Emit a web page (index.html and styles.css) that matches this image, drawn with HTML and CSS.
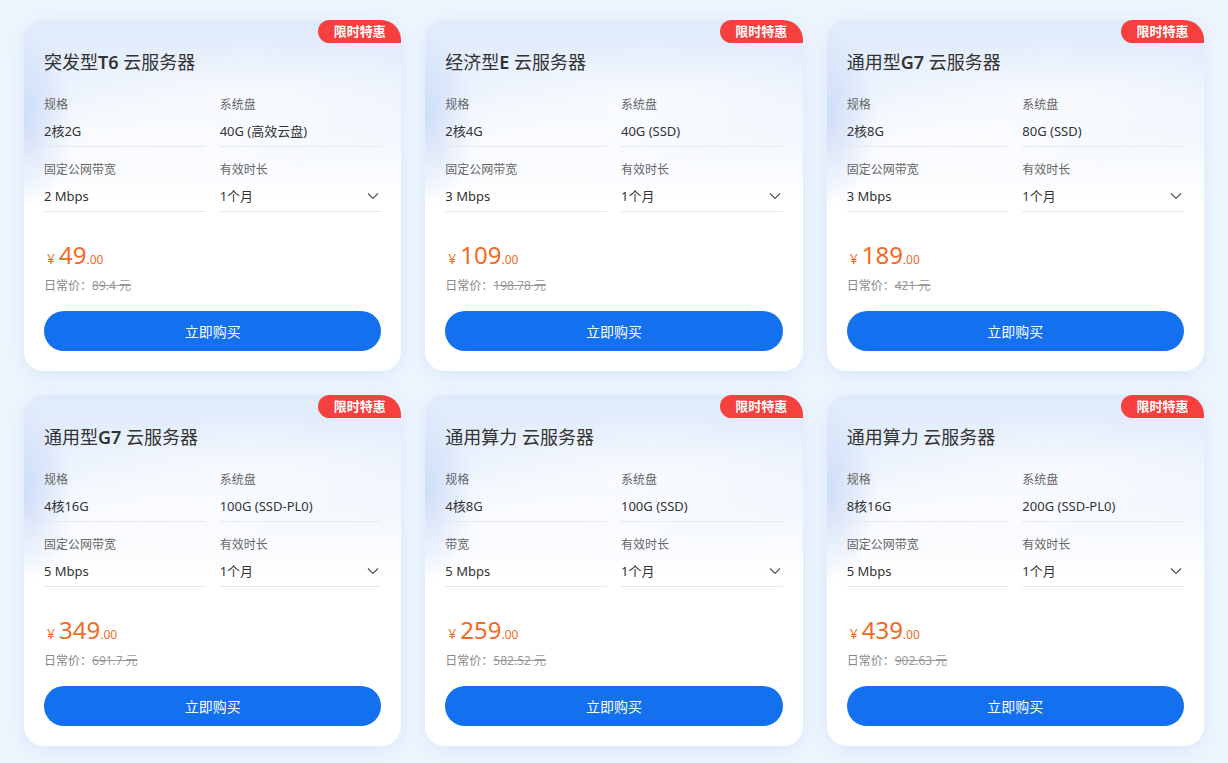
FILE: index.html
```html
<!DOCTYPE html>
<html>
  <head>
    <meta charset="UTF-8">
    <title>云服务器 限时特惠</title>
    <link rel="stylesheet" href="styles.css">
  </head>
  <body>
    <div class="grid">
      <div class="card">
        <span class="badge">限时特惠</span>
        <h2 class="title">突发型<b>T6</b> 云服务器</h2>
        <div class="fields">
          <div class="field"><div class="label">规格</div><div class="value">2核2G</div></div>
          <div class="field"><div class="label">系统盘</div><div class="value">40G (高效云盘)</div></div>
          <div class="field"><div class="label">固定公网带宽</div><div class="value">2 Mbps</div></div>
          <div class="field"><div class="label">有效时长</div><div class="value select">1个月<svg class="chev" viewBox="0 0 12 8"><path d="M1 1.5l5 5 5-5"/></svg></div></div>
        </div>
        <div class="price"><span class="yen">¥</span><span class="num">49</span><span class="dec">.00</span></div>
        <div class="orig">日常价：<s>89.4 元</s></div>
        <button class="buy">立即购买</button>
      </div>
      <div class="card">
        <span class="badge">限时特惠</span>
        <h2 class="title">经济型<b>E</b> 云服务器</h2>
        <div class="fields">
          <div class="field"><div class="label">规格</div><div class="value">2核4G</div></div>
          <div class="field"><div class="label">系统盘</div><div class="value">40G (SSD)</div></div>
          <div class="field"><div class="label">固定公网带宽</div><div class="value">3 Mbps</div></div>
          <div class="field"><div class="label">有效时长</div><div class="value select">1个月<svg class="chev" viewBox="0 0 12 8"><path d="M1 1.5l5 5 5-5"/></svg></div></div>
        </div>
        <div class="price"><span class="yen">¥</span><span class="num">109</span><span class="dec">.00</span></div>
        <div class="orig">日常价：<s>198.78 元</s></div>
        <button class="buy">立即购买</button>
      </div>
      <div class="card">
        <span class="badge">限时特惠</span>
        <h2 class="title">通用型<b>G7</b> 云服务器</h2>
        <div class="fields">
          <div class="field"><div class="label">规格</div><div class="value">2核8G</div></div>
          <div class="field"><div class="label">系统盘</div><div class="value">80G (SSD)</div></div>
          <div class="field"><div class="label">固定公网带宽</div><div class="value">3 Mbps</div></div>
          <div class="field"><div class="label">有效时长</div><div class="value select">1个月<svg class="chev" viewBox="0 0 12 8"><path d="M1 1.5l5 5 5-5"/></svg></div></div>
        </div>
        <div class="price"><span class="yen">¥</span><span class="num">189</span><span class="dec">.00</span></div>
        <div class="orig">日常价：<s>421 元</s></div>
        <button class="buy">立即购买</button>
      </div>
      <div class="card">
        <span class="badge">限时特惠</span>
        <h2 class="title">通用型<b>G7</b> 云服务器</h2>
        <div class="fields">
          <div class="field"><div class="label">规格</div><div class="value">4核16G</div></div>
          <div class="field"><div class="label">系统盘</div><div class="value">100G (SSD-PL0)</div></div>
          <div class="field"><div class="label">固定公网带宽</div><div class="value">5 Mbps</div></div>
          <div class="field"><div class="label">有效时长</div><div class="value select">1个月<svg class="chev" viewBox="0 0 12 8"><path d="M1 1.5l5 5 5-5"/></svg></div></div>
        </div>
        <div class="price"><span class="yen">¥</span><span class="num">349</span><span class="dec">.00</span></div>
        <div class="orig">日常价：<s>691.7 元</s></div>
        <button class="buy">立即购买</button>
      </div>
      <div class="card">
        <span class="badge">限时特惠</span>
        <h2 class="title">通用算力 云服务器</h2>
        <div class="fields">
          <div class="field"><div class="label">规格</div><div class="value">4核8G</div></div>
          <div class="field"><div class="label">系统盘</div><div class="value">100G (SSD)</div></div>
          <div class="field"><div class="label">带宽</div><div class="value">5 Mbps</div></div>
          <div class="field"><div class="label">有效时长</div><div class="value select">1个月<svg class="chev" viewBox="0 0 12 8"><path d="M1 1.5l5 5 5-5"/></svg></div></div>
        </div>
        <div class="price"><span class="yen">¥</span><span class="num">259</span><span class="dec">.00</span></div>
        <div class="orig">日常价：<s>582.52 元</s></div>
        <button class="buy">立即购买</button>
      </div>
      <div class="card">
        <span class="badge">限时特惠</span>
        <h2 class="title">通用算力 云服务器</h2>
        <div class="fields">
          <div class="field"><div class="label">规格</div><div class="value">8核16G</div></div>
          <div class="field"><div class="label">系统盘</div><div class="value">200G (SSD-PL0)</div></div>
          <div class="field"><div class="label">固定公网带宽</div><div class="value">5 Mbps</div></div>
          <div class="field"><div class="label">有效时长</div><div class="value select">1个月<svg class="chev" viewBox="0 0 12 8"><path d="M1 1.5l5 5 5-5"/></svg></div></div>
        </div>
        <div class="price"><span class="yen">¥</span><span class="num">439</span><span class="dec">.00</span></div>
        <div class="orig">日常价：<s>902.63 元</s></div>
        <button class="buy">立即购买</button>
      </div>
    </div>
  </body>
</html>
```

FILE: styles.css
```css
body {
  margin: 0;
  background: #eef5fe;
  font-family: "Noto Sans", "Noto Sans CJK SC", sans-serif;
  color: #333;
}

.grid {
  display: grid;
  grid-template-columns: repeat(3, 1fr);
  gap: 24px;
  padding: 20px 24px;
}

.card {
  position: relative;
  height: 351px;
  box-sizing: border-box;
  padding: 29px 20px 20px;
  border-radius: 20px;
  overflow: hidden;
  background:
    radial-gradient(ellipse 50px 90px at 0 100px, rgba(165, 190, 244, 0.45), rgba(165, 190, 244, 0)),
    radial-gradient(ellipse 260px 60px at 60% 80px, rgba(255, 255, 255, 0.7), rgba(255, 255, 255, 0)),
    radial-gradient(ellipse 200px 50px at 30% 120px, rgba(255, 255, 255, 0.6), rgba(255, 255, 255, 0)),
    linear-gradient(180deg, #dfeafb 0%, #e9f1fd 22%, #f6f9fe 38%, #fff 52%);
  box-shadow: 0 4px 18px rgba(205, 222, 245, 0.6);
}

.badge {
  position: absolute;
  top: 0;
  right: 0;
  width: 83px;
  height: 23px;
  line-height: 23px;
  text-align: center;
  background: #f5403f;
  color: #fff;
  font-size: 13px;
  font-weight: bold;
  border-radius: 12px 0 0 12px;
}

.title {
  margin: 0;
  font-size: 18px;
  line-height: 26px;
  font-weight: normal;
  color: #333;
}

.title b {
  font-weight: 600;
}

.fields {
  display: grid;
  grid-template-columns: 1fr 1fr;
  column-gap: 14px;
  row-gap: 14px;
  margin-top: 21px;
}

.label {
  font-size: 12px;
  line-height: 18px;
  color: #666;
}

.value {
  margin-top: 7px;
  padding-bottom: 5px;
  font-size: 13px;
  line-height: 20px;
  color: #333;
  border-bottom: 1px solid #e6eaf0;
}

.select {
  display: flex;
  justify-content: space-between;
  align-items: center;
}

.chev {
  width: 12px;
  height: 8px;
  margin-right: 2px;
  fill: none;
  stroke: #555;
  stroke-width: 1.2;
}

.price {
  margin-top: 27px;
  height: 32px;
  line-height: 32px;
  color: #f26a1f;
  padding-left: 3px;
}

.yen {
  font-size: 14px;
  margin-right: 4px;
}

.num {
  font-size: 24px;
}

.dec {
  font-size: 12px;
}

.orig {
  margin-top: 6px;
  font-size: 12px;
  line-height: 18px;
  color: #888;
}

.orig s {
  color: #999;
}

.buy {
  display: block;
  width: 100%;
  height: 40px;
  margin-top: 16px;
  border: none;
  border-radius: 20px;
  background: #1370ee;
  color: #fff;
  font-family: inherit;
  font-size: 14px;
  cursor: pointer;
}
```
